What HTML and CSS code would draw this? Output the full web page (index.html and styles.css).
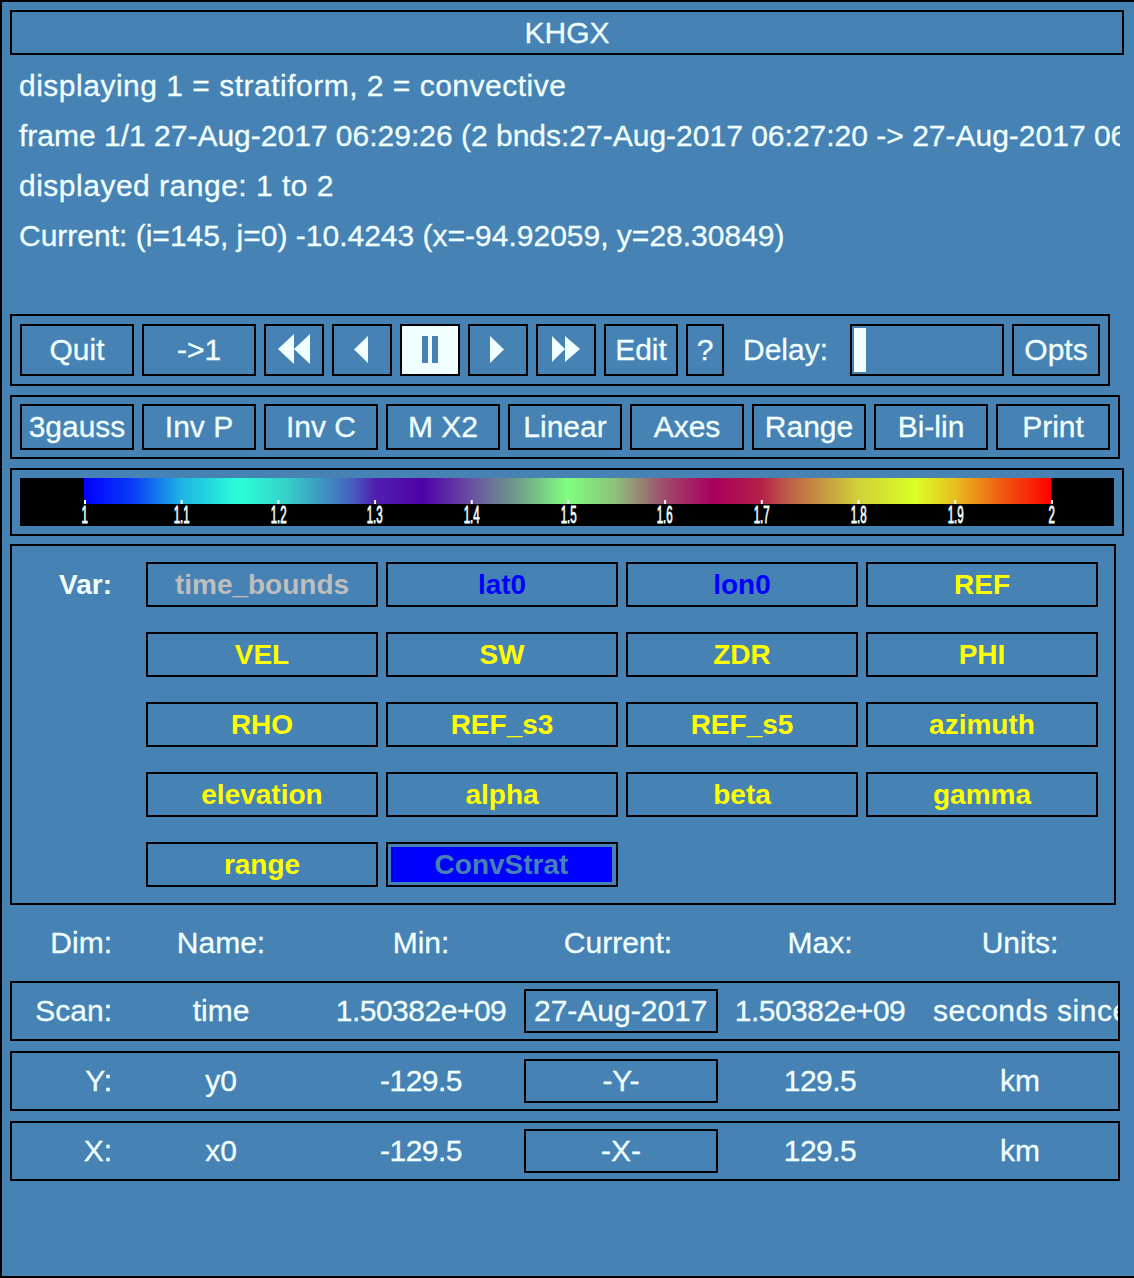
FILE: index.html
```html
<!DOCTYPE html>
<html lang="en">
<head>
  <meta charset="UTF-8">
  <title>ncview: KHGX</title>
  <link rel="stylesheet" href="styles.css">
</head>
<body>

<div class="win">
  <div class="title">KHGX</div>

  <!-- info lines -->
  <div class="info">
    <div class="line wide">displaying 1 = stratiform, 2 = convective</div>
    <div class="line">frame 1/1 27-Aug-2017 06:29:26 (2 bnds:27-Aug-2017 06:27:20 -&gt; 27-Aug-2017 06:31:32)</div>
    <div class="line wide">displayed range: 1 to 2</div>
    <div class="line">Current: (i=145, j=0) -10.4243 (x=-94.92059, y=28.30849)</div>
  </div>

  <!-- playback controls -->
  <div class="bar bar1">
    <div class="btn w114">Quit</div>
    <div class="btn w114">-&gt;1</div>
    <div class="btn w60">
      <svg width="56" height="48" viewBox="0 0 56 48"><polygon points="12,23 28,8 28,38"/><polygon points="28,23 44,8 44,38"/></svg>
    </div>
    <div class="btn w60">
      <svg width="56" height="48" viewBox="0 0 56 48"><polygon points="20,23.5 34,10 34,37"/></svg>
    </div>
    <div class="btn w60 on">
      <svg width="56" height="48" viewBox="0 0 56 48"><rect x="20" y="10" width="6" height="27"/><rect x="30" y="10" width="6" height="27"/></svg>
    </div>
    <div class="btn w60">
      <svg width="56" height="48" viewBox="0 0 56 48"><polygon points="20,10 34,23.5 20,37"/></svg>
    </div>
    <div class="btn w60">
      <svg width="56" height="48" viewBox="0 0 56 48"><polygon points="14,10 27,23 14,36"/><polygon points="27,10 42,23 27,36"/></svg>
    </div>
    <div class="btn w74">Edit</div>
    <div class="btn w38">?</div>
    <div class="delay">Delay:</div>
    <div class="slider"><div class="thumb"></div></div>
    <div class="btn w88">Opts</div>
  </div>

  <!-- display options -->
  <div class="bar bar2">
    <div class="btn w114">3gauss</div>
    <div class="btn w114">Inv P</div>
    <div class="btn w114">Inv C</div>
    <div class="btn w114">M X2</div>
    <div class="btn w114">Linear</div>
    <div class="btn w114">Axes</div>
    <div class="btn w114">Range</div>
    <div class="btn w114">Bi-lin</div>
    <div class="btn w114">Print</div>
  </div>

  <!-- colorbar -->
  <div class="cbox">
    <div class="cbar">
      <div class="grad"></div>
      <div class="labels">
        <div><span>1</span></div>
        <div><span>1.1</span></div>
        <div><span>1.2</span></div>
        <div><span>1.3</span></div>
        <div><span>1.4</span></div>
        <div><span>1.5</span></div>
        <div><span>1.6</span></div>
        <div><span>1.7</span></div>
        <div><span>1.8</span></div>
        <div><span>1.9</span></div>
        <div><span>2</span></div>
      </div>
    </div>
  </div>

  <!-- variables -->
  <div class="vars">
    <div class="varlabel">Var:</div>
    <div class="vbtn grey">time_bounds</div>
    <div class="vbtn blue">lat0</div>
    <div class="vbtn blue">lon0</div>
    <div class="vbtn">REF</div>
    <div class="vbtn">VEL</div>
    <div class="vbtn">SW</div>
    <div class="vbtn">ZDR</div>
    <div class="vbtn">PHI</div>
    <div class="vbtn">RHO</div>
    <div class="vbtn">REF_s3</div>
    <div class="vbtn">REF_s5</div>
    <div class="vbtn">azimuth</div>
    <div class="vbtn">elevation</div>
    <div class="vbtn">alpha</div>
    <div class="vbtn">beta</div>
    <div class="vbtn">gamma</div>
    <div class="vbtn">range</div>
    <div class="vbtn sel"><span>ConvStrat</span></div>
  </div>

  <!-- dimensions -->
  <div class="dims head">
    <div class="c1">Dim:</div>
    <div>Name:</div>
    <div>Min:</div>
    <div>Current:</div>
    <div>Max:</div>
    <div>Units:</div>
  </div>
  <div class="dims row">
    <div class="c1">Scan:</div>
    <div>time</div>
    <div class="num">1.50382e+09</div>
    <div class="cur"><div class="field left">27-Aug-2017 06:29:26</div></div>
    <div class="num">1.50382e+09</div>
    <div class="clip">seconds since 1970-01-01 00:00:00</div>
  </div>
  <div class="dims row">
    <div class="c1">Y:</div>
    <div>y0</div>
    <div class="num">-129.5</div>
    <div class="cur"><div class="field">-Y-</div></div>
    <div class="num">129.5</div>
    <div>km</div>
  </div>
  <div class="dims row">
    <div class="c1">X:</div>
    <div>x0</div>
    <div class="num">-129.5</div>
    <div class="cur"><div class="field">-X-</div></div>
    <div class="num">129.5</div>
    <div>km</div>
  </div>
</div>

</body>
</html>
```

FILE: styles.css
```css
body { margin: 0; font-family: "Liberation Sans", Arial, sans-serif; font-size: 30px; color: #f0ffff; -webkit-text-stroke: 0.3px currentColor; }
.win { width: 1134px; height: 1278px; box-sizing: border-box; overflow: hidden; background: #4682b4; border: 2px solid #000; border-right: 0; padding: 8px 0 0 8px; }

.title { width: 1114px; height: 45px; box-sizing: border-box; border: 2px solid #000; text-align: center; line-height: 41px; }

.info { width: 1110px; margin-top: 6px; padding-left: 9px; box-sizing: border-box; overflow: hidden; }
.info .line { height: 50px; line-height: 50px; white-space: nowrap; }
.info .wide { letter-spacing: 0.5px; }

.bar { display: flex; gap: 8px; box-sizing: border-box; border: 2px solid #000; }
.bar1 { width: 1100px; height: 72px; margin-top: 53px; padding: 8px; }
.bar2 { width: 1110px; height: 64px; margin-top: 9px; padding: 7px 8px; }
.btn { display: flex; align-items: center; justify-content: center; box-sizing: border-box; border: 2px solid #000; height: 100%; white-space: nowrap; }
.btn svg { display: block; fill: #f0ffff; }
.btn.on { background: #f0ffff; }
.btn.on svg { fill: #4682b4; }
.w114 { width: 114px; }
.w88 { width: 88px; }
.w74 { width: 74px; }
.w60 { width: 60px; }
.w38 { width: 38px; }
.delay { width: 110px; padding-left: 11px; box-sizing: border-box; display: flex; align-items: center; }
.slider { width: 154px; box-sizing: border-box; border: 2px solid #000; padding: 2px; }
.thumb { width: 12px; height: 100%; background: #f0ffff; }

.cbox { width: 1114px; height: 68px; margin-top: 9px; box-sizing: border-box; border: 2px solid #000; padding: 8px; }
.cbar { height: 48px; background: #000; padding-left: 64px; }
.grad {
  width: 969px; height: 26px;
  background:
    linear-gradient(to right, #f0ffff 2px, transparent 2px) 0 100% / 96.7px 4px repeat-x,
    linear-gradient(to right, #0000ff 0%, #0a3cf8 5%, #1eb2e4 10%, #2affd8 16%, #34d0c8 21%, #3e90c0 25%, #4858c0 28%, #5020b0 30%, #5000a8 35%, #6a50a0 40%, #70a088 45%, #80ff80 50%, #8cc078 55%, #a04a6e 60%, #a8005c 65%, #b42048 70%, #c06048 73%, #c8a040 77%, #d0d038 80%, #dcff24 86%, #e8c020 90%, #f05810 95%, #ff0000 100%) 0 0 / 967px 100% no-repeat;
}
.labels { display: flex; margin-left: -47.35px; }
.labels div { width: 96.7px; flex: none; height: 22px; line-height: 22px; text-align: center; font-size: 24px; }
.labels span { display: inline-block; transform: scaleX(0.48); -webkit-text-stroke: 0.9px currentColor; }

.vars { width: 1106px; height: 361px; margin-top: 8px; box-sizing: border-box; border: 2px solid #000; padding: 16px 0; display: grid; grid-template-columns: 126px repeat(4, 232px); grid-auto-rows: 45px; column-gap: 8px; row-gap: 25px; font-weight: bold; font-size: 28px; -webkit-text-stroke: 0; }
.varlabel { grid-row: 1 / span 5; text-align: right; padding-right: 26px; line-height: 45px; }
.vbtn { display: flex; align-items: center; justify-content: center; box-sizing: border-box; border: 2px solid #000; color: #ffff00; }
.vbtn.grey { color: #bebebe; }
.vbtn.blue { color: #0000ff; }
.vbtn.sel { padding: 3px 4px 3px 3px; color: #4682b4; }
.vbtn.sel span { flex: 1; align-self: stretch; display: flex; align-items: center; justify-content: center; background: #0000ff; }

.dims { display: grid; grid-template-columns: 106px 206px 194px 200px 204px 196px; width: 1110px; box-sizing: border-box; border: 2px solid transparent; }
.dims > div { display: flex; align-items: center; justify-content: center; white-space: nowrap; overflow: hidden; }
.dims > .c1 { justify-content: flex-end; padding-right: 6px; }
.dims > .num { letter-spacing: -0.5px; }
.head { height: 76px; }
.row { height: 60px; margin-bottom: 10px; border-color: #000; }
.dims > .cur { align-items: flex-start; justify-content: flex-start; padding: 6px 0 0 6px; }
.dims > .clip { justify-content: flex-start; padding-left: 11px; letter-spacing: 0.5px; }
.field { width: 194px; height: 44px; box-sizing: border-box; border: 2px solid #000; display: flex; align-items: center; justify-content: center; overflow: hidden; white-space: nowrap; }
.field.left { justify-content: flex-start; padding-left: 8px; }
```
